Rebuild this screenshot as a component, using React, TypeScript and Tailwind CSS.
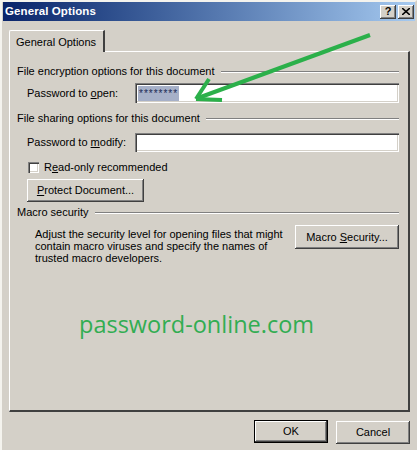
import React from "react";

const raised =
  "shadow-[inset_-1px_-1px_#404040,inset_1px_1px_#ffffff,inset_-2px_-2px_#808080,inset_2px_2px_#d4d0c8]";
const sunken =
  "shadow-[inset_1px_1px_#808080,inset_2px_2px_#404040,inset_-1px_-1px_#ffffff,inset_-2px_-2px_#d4d0c8]";

function GroupTitle({ text }: { text: string }) {
  return (
    <div className="flex items-center h-[13px]">
      <span className="whitespace-nowrap pr-[6px]">{text}</span>
      <div className="flex-1 border-t border-t-[#808080] border-b border-b-white" />
    </div>
  );
}

function Btn({ children, className = "" }: { children: React.ReactNode; className?: string }) {
  return (
    <div className={`flex items-center justify-center bg-[#d4d0c8] ${raised} ${className}`}>
      {children}
    </div>
  );
}

export default function App() {
  return (
    <div
      className="relative w-[417px] h-[450px] bg-[#d4d0c8] text-[11px] leading-[13px] text-black border-t-2 border-l-2 border-t-[#f4f3ee] border-l-[#f4f3ee] border-r-2 border-r-[#d4d0c8] overflow-hidden"
      style={{ fontFamily: "'Liberation Sans', Arial, sans-serif" }}
    >
      {/* title bar */}
      <div className="flex items-center h-[19px] ml-[1px] pl-[2px] pr-[1px] bg-gradient-to-r from-[#0a246a] to-[#a6caf0]">
        <span className="flex-1 text-white font-bold text-[11.5px] tracking-[0.1px]">General Options</span>
        <Btn className="w-[16px] h-[14px] font-bold text-[11px]">?</Btn>
        <Btn className="w-[16px] h-[14px] ml-[2px]">
          <svg width="8" height="7" viewBox="0 0 8 7">
            <path d="M0 0L8 7M8 0L0 7" stroke="#000" strokeWidth="1.6" />
          </svg>
        </Btn>
      </div>

      {/* tab */}
      <div className="flex pl-[7px] mt-[9px]">
        <div className="relative z-10 w-[96px] h-[22px] pl-[6px] pt-[5px] border-l border-t border-white border-r-2 border-r-[#404040] rounded-tl-[2px] bg-[#d4d0c8] -mb-[1px]">
          General Options
        </div>
      </div>

      {/* panel */}
      <div className="ml-[7px] mr-[5px] h-[361px] border-l border-t border-white border-r-2 border-b-2 border-r-[#404040] border-b-[#404040] pl-[7px] pr-[9px] pt-[13px] flex flex-col">
        <GroupTitle text="File encryption options for this document" />
        <div className="flex items-center mt-[5px] pl-[10px]">
          <span className="w-[108px]">
            Password to <span className="underline">o</span>pen:
          </span>
          <div className={`flex-1 h-[20px] bg-white ${sunken} flex items-center pl-[3px]`}>
            <span className="bg-[#a6b0c8] text-[#1c2a55] text-[10px] leading-[15px] px-[1px] tracking-[1px]">********</span>
          </div>
        </div>

        <div className="mt-[9px]">
          <GroupTitle text="File sharing options for this document" />
        </div>
        <div className="flex items-center mt-[8px] pl-[10px]">
          <span className="w-[108px]">
            Password to <span className="underline">m</span>odify:
          </span>
          <div className={`flex-1 h-[19px] bg-white ${sunken}`} />
        </div>

        <div className="flex items-center mt-[9px] pl-[11px]">
          <div className={`w-[11px] h-[11px] bg-white ${sunken}`} />
          <span className="ml-[5px]">
            R<span className="underline">e</span>ad-only recommended
          </span>
        </div>

        <div className="pl-[10px] mt-[5px]">
          <Btn className="w-[117px] h-[23px]">
            <span>
              <span className="underline">P</span>rotect Document...
            </span>
          </Btn>
        </div>

        <div className="mt-[4px]">
          <GroupTitle text="Macro security" />
        </div>
        <div className="flex mt-[7px]">
          <p className="pl-[18px] pt-[2px] leading-[12px] w-[270px]">
            Adjust the security level for opening files that might contain macro viruses and specify the
            names of trusted macro developers.
          </p>
          <div className="flex-1" />
          <Btn className="w-[104px] h-[24px] mt-[-1px]">
            <span>
              Macro <span className="underline">S</span>ecurity...
            </span>
          </Btn>
        </div>

        <div
          className="mt-[45px] pl-[62px] text-[23.5px] leading-[30px] text-[#32ad52]"
          style={{ fontFamily: "'Open Sans', sans-serif" }}
        >
          password-online.com
        </div>
      </div>

      {/* bottom buttons */}
      <div className="flex justify-end gap-[8px] pr-[5px] mt-[8px]">
        <div className="w-[74px] h-[23px] border border-black">
          <Btn className="w-full h-full">OK</Btn>
        </div>
        <Btn className="w-[74px] h-[23px] mt-[1px]">Cancel</Btn>
      </div>

      {/* annotation arrow */}
      <svg className="absolute left-0 top-0 pointer-events-none" width="417" height="450">
        <g stroke="#2bb04a" strokeWidth="4" strokeLinecap="butt" fill="none">
          <line x1="368" y1="33" x2="196" y2="96" />
          <line x1="194" y1="97" x2="207" y2="77" />
          <line x1="194" y1="97" x2="220" y2="98" />
        </g>
      </svg>
    </div>
  );
}
